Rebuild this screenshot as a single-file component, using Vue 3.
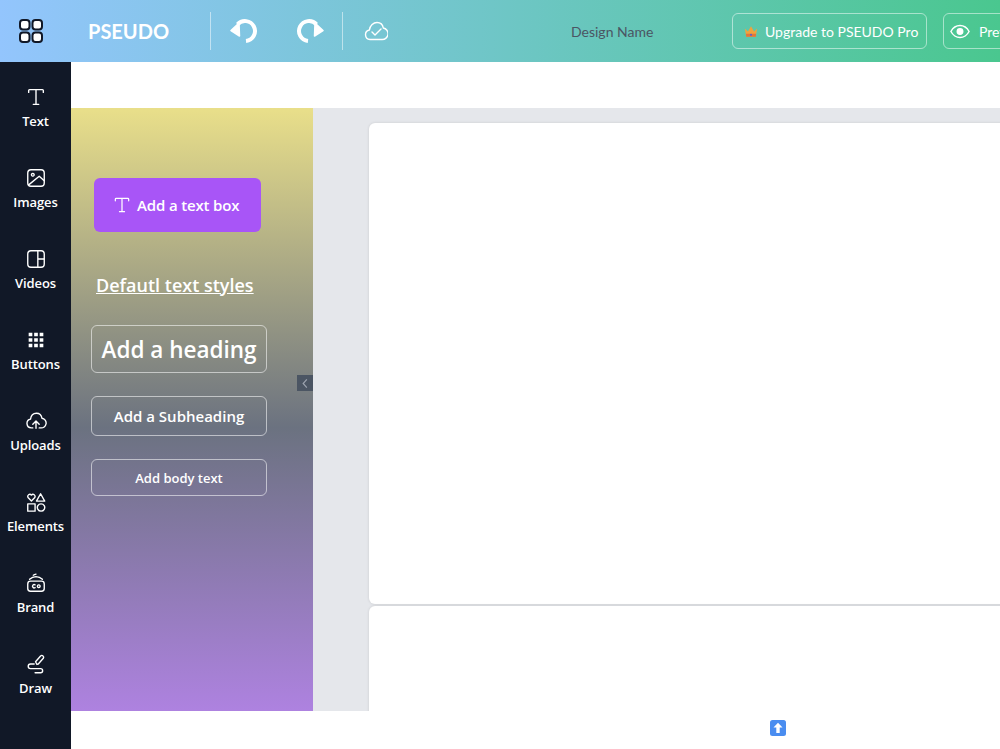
<template>
  <div class="editor">
    <header class="topbar">
      <svg class="menu-icon" viewBox="0 0 24 24" fill="#fff" stroke="#111827" stroke-width="2">
        <rect x="1" y="1" width="9.500" height="9.500" rx="3" />
        <rect x="13.500" y="1" width="9.500" height="9.500" rx="3" />
        <rect x="1" y="13.500" width="9.500" height="9.500" rx="3" />
        <rect x="13.500" y="13.500" width="9.500" height="9.500" rx="3" />
      </svg>
      <span class="brand">PSEUDO</span>
      <span class="divider first"></span>
      <svg class="history undo" viewBox="0 0 28 28" fill="none" stroke="#fff" stroke-width="4">
        <path d="M7.500 7.400a10 10 0 1 1 8.500 16.600" />
        <path d="M1 13.500 9 6l.5 13z" fill="#fff" stroke="#fff" stroke-width="1.500" stroke-linejoin="round" />
      </svg>
      <svg class="history redo" viewBox="0 0 28 28" fill="none" stroke="#fff" stroke-width="4">
        <path d="M7.500 7.400a10 10 0 1 1 8.500 16.600" />
        <path d="M1 13.500 9 6l.5 13z" fill="#fff" stroke="#fff" stroke-width="1.500" stroke-linejoin="round" />
      </svg>
      <span class="divider"></span>
      <svg class="cloud" viewBox="0 0 24 20" fill="none" stroke="#fff" stroke-width="1.400" stroke-linejoin="round" stroke-linecap="round">
        <path d="M6 18.500a4.800 4.800 0 0 1-.6-9.500C6 4.500 9.500 1.500 13 1.500c3.400 0 5.800 2.300 6.300 5.500a5.800 5.800 0 0 1-1.300 11.500z" />
        <path d="m8 11 3 3 6-6" />
      </svg>
      <span class="design-name">Design Name</span>
      <button type="button" class="top-btn upgrade">
        <svg class="crown" viewBox="0 0 16 14">
          <path d="M1 3.500 4.500 7 8 1l3.500 6L15 3.500 13.500 13h-11z" fill="#f0a33c" />
          <path d="M2.300 9.500h11.400L13.500 13h-11z" fill="#e0763c" />
          <circle cx="8" cy="10.800" r="1.200" fill="#5a5fd0" />
        </svg>
        Upgrade to PSEUDO Pro
      </button>
      <button type="button" class="top-btn preview">
        <svg class="eye" viewBox="0 0 22 16" fill="none" stroke="#fff" stroke-width="1.600">
          <path d="M1 8c2.500-4.500 6-6.500 10-6.500S18.500 3.500 21 8c-2.500 4.500-6 6.500-10 6.500S3.500 12.500 1 8z" />
          <circle cx="11" cy="8" r="3" fill="#fff" />
        </svg>
        Preview
      </button>
    </header>

    <div class="body">
      <nav class="sidebar">
        <a v-for="item in navItems" :key="item.label" class="nav-item">
          <svg
            class="nav-icon"
            viewBox="0 0 24 24"
            :fill="item.solid ? '#fff' : 'none'"
            :stroke="item.solid ? 'none' : '#fff'"
            stroke-width="1.500"
            stroke-linecap="round"
            stroke-linejoin="round"
          >
            <path v-for="d in item.paths" :key="d" :d="d" />
          </svg>
          <span>{{ item.label }}</span>
        </a>
      </nav>

      <main class="main">
        <div class="toolbar"></div>

        <div class="workspace">
          <aside class="panel">
            <button type="button" class="add-box">
              <svg class="add-box-icon" viewBox="0 0 24 24" fill="none" stroke="#fff" stroke-width="1.500" stroke-linecap="round" stroke-linejoin="round">
                <path :d="textIcon" />
              </svg>
              Add a text box
            </button>
            <h3 class="panel-title">Defautl text styles</h3>
            <button type="button" class="style-btn heading">Add a heading</button>
            <button type="button" class="style-btn subheading">Add a Subheading</button>
            <button type="button" class="style-btn body-text">Add body text</button>
            <button type="button" class="collapse" aria-label="Collapse">
              <svg viewBox="0 0 8 12" fill="none" stroke="#9ca3af" stroke-width="1.300">
                <path d="M6 1.500 2 6l4 4.500" />
              </svg>
            </button>
          </aside>

          <section class="canvas">
            <div class="sheet first-sheet"></div>
            <div class="sheet"></div>
          </section>
        </div>

        <footer class="statusbar">
          <svg class="up-icon" viewBox="0 0 16 16">
            <rect width="16" height="16" rx="2.500" fill="#4a8df0" />
            <path d="M8 2.800 12.500 7.500H9.700V13H6.300V7.500H3.500z" fill="#fff" />
          </svg>
        </footer>
      </main>
    </div>
  </div>
</template>

<script setup>
const textIcon = 'M4 7V5a1 1 0 0 1 1-1h14a1 1 0 0 1 1 1v2M12 4v16M9 20h6'

const navItems = [
  { label: 'Text', paths: [textIcon] },
  {
    label: 'Images',
    paths: [
      'M6.500 3h11A3.500 3.500 0 0 1 21 6.500v11a3.500 3.500 0 0 1-3.500 3.500h-11A3.500 3.500 0 0 1 3 17.500v-11A3.500 3.500 0 0 1 6.500 3z',
      'M8.500 7a1.500 1.500 0 1 0 .01 0z',
      'M4 19.500 15.500 10l5.500 5'
    ]
  },
  {
    label: 'Videos',
    paths: [
      'M6.500 3h11A3.500 3.500 0 0 1 21 6.500v11a3.500 3.500 0 0 1-3.500 3.500h-11A3.500 3.500 0 0 1 3 17.500v-11A3.500 3.500 0 0 1 6.500 3z',
      'M14 3v18M14 12h7'
    ]
  },
  {
    label: 'Buttons',
    solid: true,
    paths: [
      'M4 4h4v4H4zM10 4h4v4h-4zM16 4h4v4h-4z',
      'M4 10h4v4H4zM10 10h4v4h-4zM16 10h4v4h-4z',
      'M4 16h4v4H4zM10 16h4v4h-4zM16 16h4v4h-4z'
    ]
  },
  {
    label: 'Uploads',
    paths: [
      'M8.500 19.500H7a4.800 4.800 0 0 1-1-9.500C6.500 6 9 3.500 12.500 3.500c3.200 0 5.500 2.300 6 5.500A5.300 5.300 0 0 1 17 19.500h-1.500',
      'M12 20v-7.500M8.500 15.500l3.500-3.500 3.500 3.500'
    ]
  },
  {
    label: 'Elements',
    paths: [
      'M7 11 3.300 7.200A2.300 2.300 0 0 1 7 4.500a2.300 2.300 0 0 1 3.700 2.700z',
      'M17 3l4.500 8h-9z',
      'M3 14h8v8H3z',
      'M17.500 14a4 4 0 1 0 .01 0z'
    ]
  },
  {
    label: 'Brand',
    paths: [
      'M6 10h12a3 3 0 0 1 3 3v5a3 3 0 0 1-3 3H6a3 3 0 0 1-3-3v-5a3 3 0 0 1 3-3z',
      'M5 8c2-1.800 4-2.800 7-3 3 0 5 1 7 3M9 3.500c1-.7 2-1 3-1.200',
      'M11 14a1.800 1.800 0 1 0 0 3M15 14a1.500 1.500 0 1 0 .01 0z'
    ]
  },
  {
    label: 'Draw',
    paths: [
      'M13 12.500 11.500 9.500 17 3.200a2 2 0 0 1 3 2.600l-5.500 6.200z',
      'M10 12H6a2.500 2.500 0 0 0 0 5h11a2 2 0 0 1 0 4.500h-6'
    ]
  }
]
</script>

<style scoped>
.editor {
  display: flex;
  flex-direction: column;
  width: 1000px;
  height: 749px;
  overflow: hidden;
  background: #fff;
  font-family: "Open Sans", "Noto Sans", sans-serif;
}

.topbar {
  display: flex;
  align-items: center;
  flex: none;
  height: 62px;
  padding-left: 19px;
  overflow: hidden;
  background: linear-gradient(to right, #93c5fd, #4ac78f);
  font-family: "Lato", sans-serif;
  white-space: nowrap;
}

.menu-icon {
  flex: none;
  width: 24px;
  height: 24px;
}

.brand {
  width: 80px;
  margin-left: 45px;
  color: #fff;
  font-size: 20px;
  font-weight: 700;
}

.divider {
  flex: none;
  width: 1px;
  height: 38px;
  margin-left: 18px;
  background: rgba(255, 255, 255, 0.5);
}

.divider.first {
  margin-left: 42px;
}

.history {
  flex: none;
  width: 28px;
  height: 28px;
}

.undo {
  margin-left: 19px;
}

.redo {
  margin-left: 38px;
  transform: scaleX(-1);
}

.cloud {
  flex: none;
  width: 24px;
  height: 20px;
  margin-left: 21px;
}

.design-name {
  flex: none;
  width: 84px;
  margin-left: 183px;
  color: #4b5563;
  font-size: 14px;
}

.top-btn {
  display: flex;
  align-items: center;
  flex: none;
  height: 36px;
  border: 1px solid rgba(255, 255, 255, 0.5);
  border-radius: 6px;
  background: transparent;
  color: #fff;
  font-family: inherit;
  font-size: 14px;
}

.upgrade {
  width: 195px;
  margin-left: 77px;
  padding: 0 0 0 11px;
  gap: 7px;
}

.crown {
  width: 14px;
  height: 13px;
}

.preview {
  width: 120px;
  margin-left: 16px;
  padding: 0 0 0 6px;
  gap: 9px;
}

.eye {
  width: 20px;
  height: 15px;
}

.body {
  display: flex;
  flex: 1;
  min-height: 0;
}

.sidebar {
  display: flex;
  flex-direction: column;
  flex: none;
  width: 71px;
  padding-top: 24px;
  background: #111827;
}

.nav-item {
  display: flex;
  flex-direction: column;
  align-items: center;
  flex: none;
  height: 81px;
  color: #fff;
  font-size: 13px;
  font-weight: 600;
  letter-spacing: -0.1px;
  line-height: 18px;
}

.nav-icon {
  width: 22px;
  height: 22px;
  margin-bottom: 4px;
}

.main {
  display: flex;
  flex-direction: column;
  flex: 1;
  min-width: 0;
}

.toolbar {
  flex: none;
  height: 46px;
}

.workspace {
  display: flex;
  flex: none;
  height: 603px;
  overflow: hidden;
  background: #e5e7eb;
}

.panel {
  position: relative;
  display: flex;
  flex-direction: column;
  align-items: flex-start;
  flex: none;
  width: 242px;
  padding: 70px 0 0 20px;
  background: linear-gradient(to bottom, #e9df8a, #6b7280 53%, #ae82e0);
  box-sizing: border-box;
}

.add-box {
  display: flex;
  align-items: center;
  gap: 5px;
  width: 167px;
  height: 54px;
  margin-left: 3px;
  padding: 0 0 0 18px;
  border: 0;
  border-radius: 6px;
  background: #a855f7;
  color: #fff;
  font-family: inherit;
  font-size: 15px;
  font-weight: 600;
  letter-spacing: -0.15px;
}

.add-box-icon {
  width: 20px;
  height: 20px;
}

.panel-title {
  margin: 40px 0 0 5px;
  color: #fff;
  font-size: 18px;
  font-weight: 600;
  line-height: 27px;
  text-decoration: underline;
}

.style-btn {
  width: 176px;
  border: 1px solid rgba(255, 255, 255, 0.55);
  border-radius: 6px;
  background: transparent;
  color: #fff;
  font-family: inherit;
  font-weight: 600;
}

.heading {
  height: 48px;
  margin-top: 26px;
  font-size: 22.500px;
}

.subheading {
  height: 40px;
  margin-top: 23px;
  font-size: 15px;
}

.body-text {
  height: 37px;
  margin-top: 23px;
  font-size: 13px;
}

.collapse {
  position: absolute;
  top: 267px;
  right: 0;
  display: grid;
  place-items: center;
  width: 16px;
  height: 16px;
  padding: 0;
  border: 0;
  background: #4b5563;
}

.collapse svg {
  width: 8px;
  height: 11px;
}

.canvas {
  flex: 1;
  min-width: 0;
  padding: 15px 0 0 56px;
}

.sheet {
  width: 800px;
  height: 481px;
  border-radius: 6px 0 0 6px;
  background: #fff;
  box-shadow: 0 0 3px rgba(0, 0, 0, 0.12);
}

.first-sheet {
  margin-bottom: 2px;
}

.statusbar {
  display: flex;
  align-items: flex-start;
  flex: 1;
  padding: 9px 0 0 699px;
}

.up-icon {
  width: 16px;
  height: 16px;
}
</style>
